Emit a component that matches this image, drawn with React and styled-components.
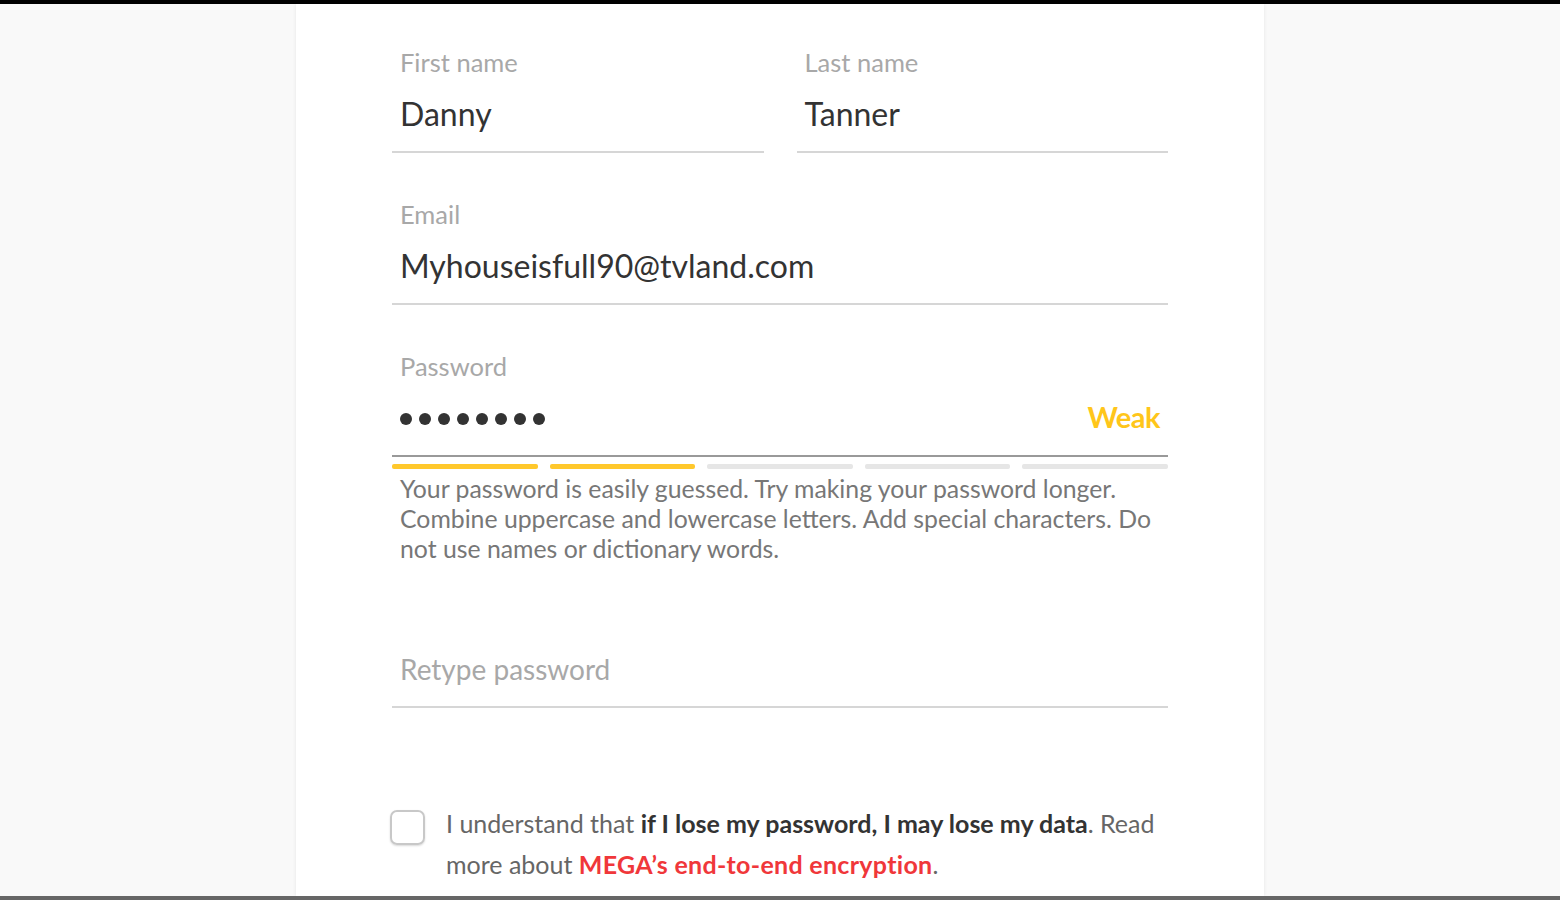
import styled, { createGlobalStyle } from "styled-components";

const GlobalStyle = createGlobalStyle`
  html, body {
    margin: 0;
    padding: 0;
    background: #f9f9f9;
    font-family: Lato, "Open Sans", sans-serif;
  }
`;

const Page = styled.div`
  display: flex;
  flex-direction: column;
  height: 100vh;
  overflow: hidden;
`;

const TopBar = styled.div`
  height: 4px;
  background: #000;
  flex: none;
`;

const BottomBar = styled.div`
  height: 4px;
  background: #666;
  flex: none;
`;

const Main = styled.div`
  flex: 1;
  display: flex;
  justify-content: center;
  overflow: hidden;
`;

const Card = styled.div`
  width: 968px;
  box-sizing: border-box;
  background: #fff;
  padding: 43px 96px 0;
  box-shadow: 0 0 4px rgba(0, 0, 0, 0.08);
`;

const Row = styled.div`
  display: flex;
  gap: 33px;
`;

const Field = styled.div`
  flex: 1;
  margin-bottom: ${(p) => p.$mb ?? 46}px;
`;

const Label = styled.div`
  padding-left: 8px;
  height: 30px;
  line-height: 30px;
  font-size: 25.5px;
  color: #a8a8a8;
`;

const ValueRow = styled.div`
  display: flex;
  align-items: center;
  justify-content: space-between;
  margin-top: 17px;
  padding: 0 8px 17px;
  height: 40px;
  border-bottom: 2px solid ${(p) => (p.$active ? "#999" : "#d6d6d6")};
`;

const Value = styled.span`
  line-height: 40px;
  color: ${(p) => (p.$placeholder ? "#a8a8a8" : "#333")};
  font-size: ${(p) => (p.$placeholder ? "28px" : "32px")};
`;

const Dots = styled.div`
  display: flex;
  gap: 7px;
  margin-top: 2px;
`;

const Dot = styled.span`
  width: 12px;
  height: 12px;
  border-radius: 50%;
  background: #333;
`;

const Strength = styled.span`
  font-size: 29px;
  font-weight: 700;
  color: #ffc61a;
  letter-spacing: -0.5px;
  margin-top: -3px;
`;

const Bars = styled.div`
  display: flex;
  gap: 12px;
  margin-top: 7px;
`;

const Bar = styled.div`
  flex: 1;
  height: 5px;
  border-radius: 2px;
  background: ${(p) => (p.$on ? "#ffc82c" : "#e6e6e6")};
`;

const Hint = styled.p`
  margin: 5px 0 38px;
  padding-left: 8px;
  font-size: 24.8px;
  line-height: 30px;
  color: #777;
  white-space: nowrap;
`;

const Consent = styled.div`
  display: flex;
  align-items: flex-start;
  gap: 21px;
  margin-top: 95px;
  margin-left: -2px;
`;

const Box = styled.div`
  flex: none;
  width: 31px;
  height: 31px;
  margin-top: 7px;
  border: 2px solid #c8c8c8;
  border-radius: 7px;
  box-shadow: 0 1px 2px rgba(0, 0, 0, 0.15);
`;

const ConsentText = styled.p`
  margin: 0;
  font-size: 25px;
  line-height: 41px;
  color: #666;

  b {
    color: #333;
    font-weight: 700;
  }

  a {
    color: #f0373a;
    font-weight: 700;
    text-decoration: none;
    letter-spacing: 0.3px;
  }
`;

export default function App() {
  const bars = [true, true, false, false, false];
  return (
    <Page>
      <GlobalStyle />
      <TopBar />
      <Main>
        <Card>
          <Row>
            <Field>
              <Label>First name</Label>
              <ValueRow>
                <Value>Danny</Value>
              </ValueRow>
            </Field>
            <Field>
              <Label>Last name</Label>
              <ValueRow>
                <Value>Tanner</Value>
              </ValueRow>
            </Field>
          </Row>
          <Field>
            <Label>Email</Label>
            <ValueRow>
              <Value>Myhouseisfull90@tvland.com</Value>
            </ValueRow>
          </Field>
          <Field $mb={0}>
            <Label>Password</Label>
            <ValueRow $active>
              <Dots>
                {Array.from({ length: 8 }, (_, i) => (
                  <Dot key={i} />
                ))}
              </Dots>
              <Strength>Weak</Strength>
            </ValueRow>
          </Field>
          <Bars>
            {bars.map((on, i) => (
              <Bar key={i} $on={on} />
            ))}
          </Bars>
          <Hint>
            Your password is easily guessed. Try making your password longer.
            <br />
            Combine uppercase and lowercase letters. Add special characters. Do
            <br />
            not use names or dictionary words.
          </Hint>
          <Field $mb={0}>
            <Label />
            <ValueRow>
              <Value $placeholder>Retype password</Value>
            </ValueRow>
          </Field>
          <Consent>
            <Box />
            <ConsentText>
              I understand that <b>if I lose my password, I may lose my data</b>.
              Read more about <a href="#">MEGA’s end-to-end encryption</a>.
            </ConsentText>
          </Consent>
        </Card>
      </Main>
      <BottomBar />
    </Page>
  );
}
